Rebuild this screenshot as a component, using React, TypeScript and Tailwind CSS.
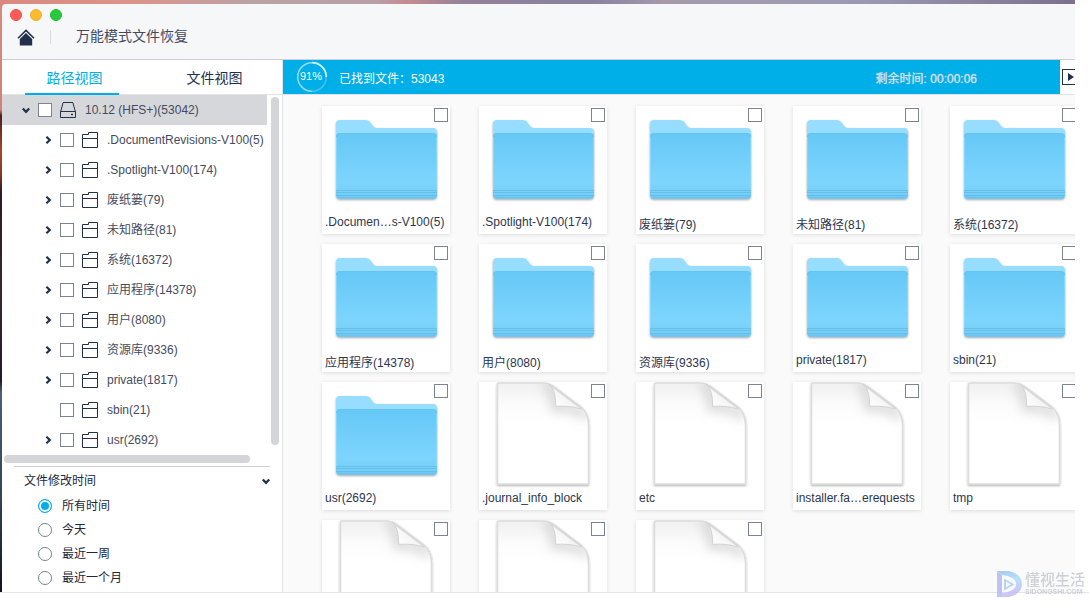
import React, { useState } from "react";

const tree = [
  { name: ".DocumentRevisions-V100(5)", open: true },
  { name: ".Spotlight-V100(174)", open: true },
  { name: "废纸篓(79)", open: true },
  { name: "未知路径(81)", open: true },
  { name: "系统(16372)", open: true },
  { name: "应用程序(14378)", open: true },
  { name: "用户(8080)", open: true },
  { name: "资源库(9336)", open: true },
  { name: "private(1817)", open: true },
  { name: "sbin(21)", open: false },
  { name: "usr(2692)", open: true },
];

const files = [
  { name: ".Documen…s-V100(5)", type: "folder" },
  { name: ".Spotlight-V100(174)", type: "folder" },
  { name: "废纸篓(79)", type: "folder" },
  { name: "未知路径(81)", type: "folder" },
  { name: "系统(16372)", type: "folder" },
  { name: "应用程序(14378)", type: "folder" },
  { name: "用户(8080)", type: "folder" },
  { name: "资源库(9336)", type: "folder" },
  { name: "private(1817)", type: "folder" },
  { name: "sbin(21)", type: "folder" },
  { name: "usr(2692)", type: "folder" },
  { name: ".journal_info_block", type: "doc" },
  { name: "etc", type: "doc" },
  { name: "installer.fa…erequests", type: "doc" },
  { name: "tmp", type: "doc" },
  { name: "", type: "doc" },
  { name: "", type: "doc" },
  { name: "", type: "doc" },
];

const times = ["所有时间", "今天", "最近一周", "最近一个月"];

const Chevron = ({ down = false }: { down?: boolean }) => (
  <svg
    width="8"
    height="8"
    viewBox="0 0 8 8"
    fill="none"
    stroke="#22304c"
    strokeWidth="2.2"
    className={down ? "rotate-90" : ""}
  >
    <path d="M2.4 .8 5.8 4 2.4 7.200" />
  </svg>
);

const CheckBox = ({ label, className = "" }: { label: string; className?: string }) => (
  <input
    type="checkbox"
    aria-label={label}
    className={`block h-[14px] w-[14px] shrink-0 appearance-none border border-[#7b8395] bg-white checked:bg-[#00aee8] ${className}`}
  />
);

const HomeIcon = () => (
  <svg width="18" height="17" viewBox="0 0 18 17">
    <path d="M1 9.2 9 1.4l8 7.8" fill="none" stroke="#22304c" strokeWidth="1.6" />
    <path d="M9 4 15.2 10v6.5H2.8V10z" fill="#22304c" />
  </svg>
);

const DriveIcon = () => (
  <svg width="16" height="16" viewBox="0 0 16 16" fill="none" stroke="#22304c">
    <path d="M3.2.5h9.6l2.7 9.5v5.5H.5V10zM.5 9.5h15" />
    <path d="M11 12.5h2" strokeWidth="1.4" />
  </svg>
);

const FolderOutline = () => (
  <svg width="16" height="16" viewBox="0 0 16 16" fill="none" stroke="#22304c">
    <path d="M.5 15.5v-13h6v-2h9v15zM.5 6.5h15" />
  </svg>
);

const FolderArt = () => (
  <svg width="128" height="102" viewBox="0 0 128 102" className="block">
    <defs>
      <linearGradient id="folderFront" x1="0" y1="0" x2="0" y2="1">
        <stop offset="0" stopColor="#66c8f6" />
        <stop offset="0.75" stopColor="#7dd5fd" />
        <stop offset="1" stopColor="#73ccf5" />
      </linearGradient>
      <filter id="folderShadow" x="-10%" y="-10%" width="120%" height="130%">
        <feDropShadow dx="0" dy="1" stdDeviation="1.2" floodColor="#000" floodOpacity="0.35" />
      </filter>
    </defs>
    <path
      d="M14 18q0-4 4-4h26q3 0 5 3l2 3q1.5 2 4 2h56q4 0 4 4v63q0 4-4 4H18q-4 0-4-4z"
      fill="#96ddff"
      filter="url(#folderShadow)"
    />
    <path d="M14 31q0-4 4-4h93q4 0 4 4v58q0 4-4 4H18q-4 0-4-4z" fill="url(#folderFront)" />
    <path d="M14.5 31q0-3.5 3.5-3.5h93q3.5 0 3.5 3.5" fill="none" stroke="#5fbdeb" strokeOpacity="0.5" />
    <path d="M14.5 31v54M114.5 31v54" stroke="#8edbff" strokeOpacity="0.7" />
    <path d="M14 84.5h101M14 86.5h101M14 89.5h101" stroke="#5db8e4" strokeOpacity="0.7" />
    <path d="M15 91.5h99" stroke="#67bfe9" strokeOpacity="0.6" strokeWidth="2" />
  </svg>
);

const DocArt = () => (
  <svg width="128" height="108" viewBox="0 0 128 108" className="block">
    <defs>
      <linearGradient id="docTop" x1="0" y1="0" x2="0" y2="1">
        <stop offset="0" stopColor="#f0f0f0" />
        <stop offset="0.22" stopColor="#fcfcfc" />
        <stop offset="0.4" stopColor="#ffffff" />
      </linearGradient>
      <linearGradient id="docFlap" gradientUnits="userSpaceOnUse" x1="88" y1="15" x2="77" y2="25">
        <stop offset="0" stopColor="#f4f4f4" />
        <stop offset="1" stopColor="#ffffff" />
      </linearGradient>
      <filter id="docShadow" x="-10%" y="-10%" width="120%" height="120%">
        <feDropShadow dx="0" dy="1" stdDeviation="1" floodColor="#000" floodOpacity="0.35" />
      </filter>
      <filter id="docBlur" x="-60%" y="-60%" width="220%" height="220%">
        <feGaussianBlur stdDeviation="6" />
      </filter>
      <clipPath id="docClip">
        <path d="M19 2h44q8 0 14 5l25 19q7 6 7.5 17v58H19z" />
      </clipPath>
    </defs>
    <path
      d="M18.5 2.5q0-1.5 1.5-1.5h43q8 0 14 5l25 19q7 6 7.5 17v60h-91z"
      fill="url(#docTop)"
      stroke="#dcdcdc"
      strokeWidth="1.5"
      filter="url(#docShadow)"
    />
    <g clipPath="url(#docClip)">
      <path
        d="M66 0q9 5 10 25 18-2 32 10"
        fill="none"
        stroke="#b4b4b4"
        strokeOpacity="0.6"
        strokeWidth="8"
        filter="url(#docBlur)"
      />
    </g>
    <path d="M72 3q5 7 4.7 21.5Q91 23.5 102 27z" fill="url(#docFlap)" />
    <path d="M70 2q7 6 6.7 22.3Q91 23.5 102 27" fill="none" stroke="#d2d2d2" />
    <path d="M71 3 103 27" stroke="#d6d6d6" strokeWidth="1.5" />
  </svg>
);

const Header = () => (
  <header className="h-14 shrink-0 rounded-tl border-b border-[#cdced8] bg-[#f6f7f9] pt-[5px]">
    <div className="flex gap-2 pl-2">
      <button aria-label="关闭" className="h-3 w-3 rounded-full border border-[#f0504a] bg-[#ff5c55]" />
      <button aria-label="最小化" className="h-3 w-3 rounded-full border border-[#eeac2c] bg-[#fdbc2e]" />
      <button aria-label="全屏" className="h-3 w-3 rounded-full border border-[#22bb36] bg-[#27c93f]" />
    </div>
    <div className="mt-[6px] flex h-5 items-center pl-[15px]">
      <button aria-label="主页">
        <HomeIcon />
      </button>
      <span className="ml-[15px] h-[14px] w-px bg-[#d9dae0]" />
      <h1 className="ml-[25px] pb-[2px] text-sm text-[#454b5d]">万能模式文件恢复</h1>
    </div>
  </header>
);

const Sidebar = () => {
  const [time, setTime] = useState(times[0]);

  return (
    <aside className="flex w-[281px] shrink-0 flex-col border-r border-[#e3e4e8] bg-white text-xs text-[#454b5d]">
      <div className="flex h-[35px] shrink-0 border-b border-[#e3e4e8] text-sm text-[#22304c]">
        <div className="flex flex-1 justify-center">
          <button className="h-[35px] w-[94px] border-b-2 border-[#00aee8] pt-[3px] pl-[5px] text-[#00aee8]">
            路径视图
          </button>
        </div>
        <div className="flex flex-1 justify-center">
          <button className="h-[35px] w-[94px] border-b-2 border-transparent pt-[3px] pl-[5px]">文件视图</button>
        </div>
      </div>

      <div className="flex shrink-0">
        <ul className="min-w-0 flex-1">
          <li className="flex h-[30px] items-center bg-[#d6d7db] pl-5">
            <button aria-label="收起">
              <Chevron down />
            </button>
            <CheckBox label="10.12 (HFS+)" className="ml-2" />
            <span className="ml-2">
              <DriveIcon />
            </span>
            <span className="ml-[9px] whitespace-nowrap">10.12 (HFS+)(53042)</span>
          </li>
          {tree.map((item) => (
            <li key={item.name} className="flex h-[30px] items-center pl-[42px]">
              <span className="flex w-4 items-center">
                {item.open && (
                  <button aria-label="展开">
                    <Chevron />
                  </button>
                )}
              </span>
              <CheckBox label={item.name} />
              <span className="ml-2">
                <FolderOutline />
              </span>
              <span className="ml-[9px] whitespace-nowrap">{item.name}</span>
            </li>
          ))}
        </ul>
        <div className="mt-[2px] mr-[3px] mb-[10px] ml-1 w-2 rounded-full bg-[#d4d5d9]" />
      </div>
      <div className="mr-8 ml-[2px] h-2 shrink-0 rounded-full bg-[#d4d5d9]" />

      <fieldset className="mt-[3px] mr-3 ml-3 border-t border-[#cdced8] text-[#22283a]">
        <div className="flex h-[27px] items-center justify-between pl-[10px]">
          <span>文件修改时间</span>
          <button aria-label="收起">
            <Chevron down />
          </button>
        </div>
        {times.map((item) => (
          <label key={item} className="flex h-6 items-center gap-[10px] pl-6">
            <input
              type="radio"
              name="time"
              checked={time === item}
              onChange={() => setTime(item)}
              className="h-[14px] w-[14px] appearance-none rounded-full border border-[#7b8395] bg-white checked:border-[#00aee8] checked:bg-[#00aee8] checked:shadow-[inset_0_0_0_2px_#fff]"
            />
            {item}
          </label>
        ))}
      </fieldset>
    </aside>
  );
};

const StatusBar = () => (
  <div className="flex h-[35px] shrink-0 border-b border-[#dfe1e6] bg-white">
    <div className="flex flex-1 items-center bg-[#00aee8] pr-[83px] pl-[13px] text-xs text-white">
      <div className="relative flex h-8 w-8 items-center justify-center pr-[2px] pb-[2px] text-[11px]">
        <svg className="absolute inset-0" width="32" height="32" viewBox="0 0 32 32" fill="none">
          <circle cx="16" cy="16" r="14.3" stroke="#fff" strokeOpacity="0.25" strokeWidth="1.5" />
          <path d="M16 1.7A14.3 14.3 0 0 1 30.3 16" stroke="#d8f2fc" strokeWidth="1.8" />
          <path d="M16 1.7A14.3 14.3 0 0 0 16 30.3" stroke="#fff" strokeOpacity="0.4" strokeWidth="1.5" />
        </svg>
        <span>91%</span>
      </div>
      <span className="ml-[11px] pt-[3px]">已找到文件：53043</span>
      <span className="ml-auto pt-[3px] text-[#d0dfe7] [text-shadow:0_0_1px_#d0dfe7]">剩余时间: 00:00:06</span>
    </div>
    <div className="flex w-[15px] shrink-0 items-center overflow-hidden pl-[2px]">
      <button aria-label="继续" className="flex h-4 w-4 shrink-0 items-center border border-[#22304c] pl-[5px]">
        <svg width="6" height="8" viewBox="0 0 6 8">
          <path d="M0 0 6 4 0 8z" fill="#22304c" />
        </svg>
      </button>
    </div>
  </div>
);

const FileCard = ({ name, type }: { name: string; type: string }) => (
  <div className="relative h-32 bg-white text-xs text-[#2c3650] shadow-[0_1px_4px_rgba(0,0,0,0.12)]">
    {type === "folder" ? <FolderArt /> : <DocArt />}
    <CheckBox label={name || "文件"} className="absolute top-[2px] right-[2px]" />
    <span className="absolute top-[109px] left-[3px] leading-[normal] whitespace-nowrap">{name}</span>
  </div>
);

const Watermark = () => (
  <div className="absolute right-1 bottom-[6px] flex items-center gap-[2px] text-[#c3c6cf] opacity-80">
    <svg width="27" height="28" viewBox="0 0 27 28">
      <defs>
        <linearGradient id="markFill" x1="0" y1="0" x2="0.3" y2="1">
          <stop offset="0" stopColor="#8bbcf5" />
          <stop offset="0.5" stopColor="#a8dcf8" />
          <stop offset="1" stopColor="#c5b4f3" />
        </linearGradient>
      </defs>
      <path d="M1 1h12q13 3 13 13T13 27H6v-4q14-2 14-9T6 5L1 1z" fill="url(#markFill)" />
      <path d="M1 1l5 4v22H1z" fill="#b3b5f3" />
      <path d="M8 8.5v12l10.5-6z" fill="#a8c8f6" />
      <path d="M10 11.5v6l5-3z" fill="#f4fbff" />
    </svg>
    <div className="flex flex-col">
      <span className="text-[15px] leading-4 font-medium">懂视生活</span>
      <span className="text-[7px] leading-2 font-bold">SIDONGSHI.COM</span>
    </div>
  </div>
);

export default function App() {
  return (
    <div className="relative flex h-screen flex-col overflow-hidden bg-white font-['Liberation_Sans','Noto_Sans_CJK_SC',sans-serif]">
      <div className="flex min-h-0 flex-1 flex-col pr-[14px]">
        <div className="h-1 shrink-0 bg-[linear-gradient(90deg,#d98a80,#dd9389_12%,#b9a3a6_24%,#b8a0a6_35%,#c58a90_38%,#94819b_43%,#8a80a0_55%,#a89aac_62%,#9a9ab5_80%,#7f6f8e)]" />
        <div className="flex min-h-0 flex-1 bg-[linear-gradient(180deg,#d98a80,#cf8078_18%,#4a201c_19%,#a8452c_25%,#8a3526_29%,#2a1c24_32%,#3a2830_50%,#1f1a26_64%,#4a6078_66%,#33435a_84%,#151318)] pl-[2px]">
          <div className="flex min-w-0 flex-1 flex-col">
            <Header />
            <div className="flex min-h-0 flex-1">
              <Sidebar />
              <main className="flex min-w-0 flex-1 flex-col bg-[#fafafa]">
                <StatusBar />
                <div className="min-h-0 flex-1 overflow-hidden pt-[11px] pl-[39px]">
                  <div className="grid grid-cols-[repeat(5,128px)] gap-x-[29px] gap-y-[10px]">
                    {files.map((file, i) => (
                      <FileCard key={i} name={file.name} type={file.type} />
                    ))}
                  </div>
                </div>
              </main>
            </div>
          </div>
        </div>
      </div>
      <footer className="h-3 shrink-0 border-t border-[#e3e4e8]" />
      <Watermark />
    </div>
  );
}
